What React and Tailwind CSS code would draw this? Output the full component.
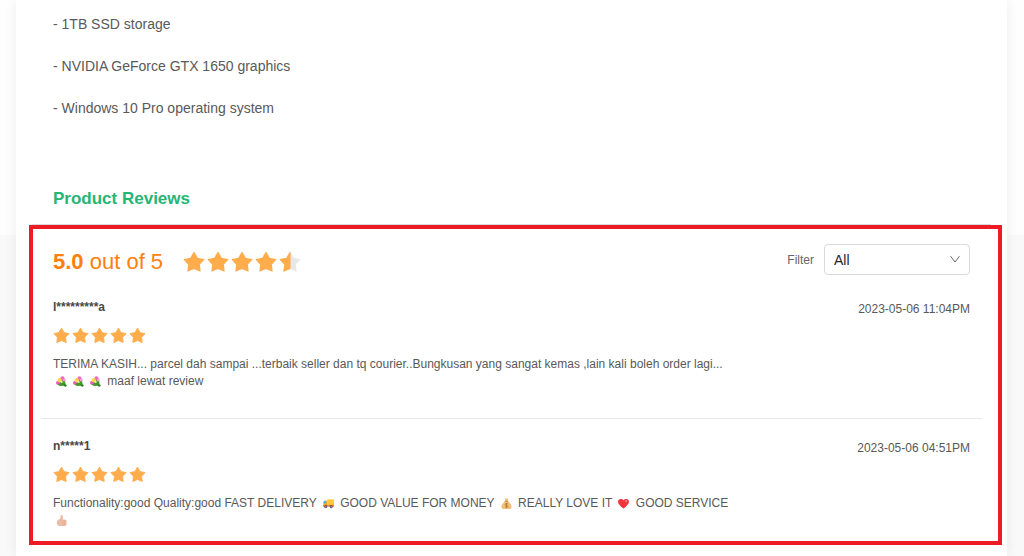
import { useState } from "react";

const STAR_PATH =
  "M12 1.6l3.6 6.4 7 1.3-4.9 5.3.9 7.2-6.6-2.8-6.6 2.8.9-7.2L1.4 9.3l7-1.3z";
const HALF_STAR_PATH = "M12 1.6v17.4l-6.6 2.8.9-7.2L1.4 9.3l7-1.3z";

const specs = [
  "- 1TB SSD storage",
  "- NVIDIA GeForce GTX 1650 graphics",
  "- Windows 10 Pro operating system",
];

const Star = ({ className, half }) => (
  <svg viewBox="0 0 24 24" className={className} strokeLinejoin="round" aria-hidden="true">
    <path
      d={STAR_PATH}
      fill={half ? "#e8e8e8" : "#ffad4c"}
      stroke={half ? "#e8e8e8" : "#ffad4c"}
      strokeWidth="1.4"
    />
    {half && <path d={HALF_STAR_PATH} fill="#ffad4c" stroke="#ffad4c" strokeWidth="1.2" />}
  </svg>
);

const Emoji = ({ label, children }) => (
  <svg
    viewBox="0 0 24 24"
    role="img"
    aria-label={label}
    className="inline-block size-[11px] mx-[3px] align-middle"
  >
    {children}
  </svg>
);

const Bouquet = () => (
  <Emoji label="bouquet">
    <path d="M3 19l8-9 8-3 2 11 3 2-2 3-4-2-9 1z" fill="#3f9a2c" />
    <path d="M17 18l4 5" stroke="#2f7d20" strokeWidth="3" />
    <circle cx="14" cy="5" r="4.5" fill="#f06bc0" />
    <circle cx="4" cy="15" r="4" fill="#ee58b6" />
    <circle cx="18" cy="9" r="3" fill="#f59ad2" />
    <circle cx="8" cy="9" r="4.5" fill="#f9d64a" />
    <circle cx="12" cy="13" r="2.5" fill="#f7ef9a" />
  </Emoji>
);

const Truck = () => (
  <Emoji label="delivery truck">
    <path d="M9 3h15v13H9z" fill="#ffcb2e" />
    <path d="M1 9l3-3h5v12H1z" fill="#ffa726" />
    <path d="M1 8l2-2h4v6H1z" fill="#4fb4e8" />
    <path d="M0 15h24v4H0z" fill="#f07c3c" />
    <circle cx="6" cy="19" r="3.2" fill="#514a6b" />
    <circle cx="18" cy="19" r="3.2" fill="#514a6b" />
    <circle cx="6" cy="19" r="1.2" fill="#c9c5d6" />
    <circle cx="18" cy="19" r="1.2" fill="#c9c5d6" />
  </Emoji>
);

const MoneyBag = () => (
  <Emoji label="money bag">
    <path d="M8 1h8l-2 6c5 3 9 7 9 12 0 3-2 5-5 5H6c-3 0-5-2-5-5 0-5 4-9 9-12z" fill="#f3be70" />
    <path d="M8 7h8" stroke="#b97b3a" strokeWidth="2" />
    <path
      d="M15 13c-2-2-6-1-6 1 0 3 6 2 6 4 0 2-4 3-6 1M12 11v11"
      stroke="#a06a36"
      strokeWidth="1.5"
      fill="none"
    />
  </Emoji>
);

const Heart = () => (
  <Emoji label="red heart">
    <path d="M12 23C4 17 0 12 0 8c0-6 8-8 12-3 4-5 12-3 12 3 0 4-4 9-12 15z" fill="#f5333f" />
    <path d="M15 6c2-2 5-1 5 2-1 1-4 1-5-2z" fill="#ff8f96" />
  </Emoji>
);

const ThumbsUp = () => (
  <Emoji label="thumbs up">
    <path
      d="M10 2c0-3 5-3 5 1v7h4c3 0 4 2 4 4v5c0 3-2 5-5 5H8c-4 0-6-3-6-6 0-4 1-7 4-8 3-1 4-3 4-8z"
      fill="#ecbba6"
    />
    <path d="M15 10v12M19 11v11" stroke="#dfa591" strokeWidth="1.2" fill="none" />
  </Emoji>
);

const reviews = [
  {
    id: 1,
    name: "l*********a",
    date: "2023-05-06 11:04PM",
    body: (
      <>
        TERIMA KASIH... parcel dah sampai ...terbaik seller dan tq courier..Bungkusan yang sangat
        kemas ,lain kali boleh order lagi... <Bouquet />
        <Bouquet />
        <Bouquet /> maaf lewat review
      </>
    ),
  },
  {
    id: 2,
    name: "n*****1",
    date: "2023-05-06 04:51PM",
    body: (
      <>
        Functionality:good Quality:good FAST DELIVERY <Truck /> GOOD VALUE FOR MONEY <MoneyBag />{" "}
        REALLY LOVE IT <Heart /> GOOD SERVICE <ThumbsUp />
      </>
    ),
  },
];

const Review = ({ name, date, body }) => (
  <li className="px-3 pt-[17px] pb-7 border-b border-[#e8e8e8] last:border-b-0 last:pb-3">
    <div className="flex justify-between">
      <h3 className="text-xs leading-5 font-bold text-[#484848]">{name}</h3>
      <time className="text-xs leading-6 text-[#595959]">{date}</time>
    </div>
    <div className="flex gap-[2px] mt-[6px]" role="img" aria-label="5 stars">
      {[1, 2, 3, 4, 5].map((n) => (
        <Star key={n} className="size-[17px]" />
      ))}
    </div>
    <p className="w-3/4 mt-3 text-xs leading-[17px] text-[#595959]">{body}</p>
  </li>
);

const App = () => {
  const [filter, setFilter] = useState("all");

  return (
    <div className="min-h-screen bg-[linear-gradient(#fefefe_235px,#f9f9f9_235px)] font-['Liberation_Sans',Arial,sans-serif]">
      <main className="min-h-screen ml-4 mr-[17px] pt-[3px] pb-3 bg-white shadow-[0_0_12px_rgba(0,0,0,0.07)]">
        {/* Specs */}
        <ul className="px-[37px] text-sm leading-[42px] text-[#595959]">
          {specs.map((spec) => (
            <li key={spec}>{spec}</li>
          ))}
        </ul>

        <h2 className="mx-4 mt-14 px-[21px] pb-[11px] border-b border-[#d9d9d9] text-[17px] leading-7 font-bold text-[#27b574]">
          Product Reviews
        </h2>

        {/* Reviews */}
        <section className="ml-[13px] mr-[5px] pt-[15px] pl-2 pr-4 border-4 border-[#ed1c24]">
          <div className="flex items-center justify-between px-3 mb-[5px]">
            <div className="flex items-center pt-1">
              <p className="text-[22px] leading-6 text-[#ff7f0e]">
                <strong>5.0</strong> out of 5
              </p>
              <div className="flex gap-[2px] ml-5" role="img" aria-label="4.5 stars">
                {[1, 2, 3, 4, 5].map((n) => (
                  <Star key={n} className="size-[22px]" half={n === 5} />
                ))}
              </div>
            </div>

            <div className="flex items-center">
              <label htmlFor="filter" className="mr-[10px] text-xs text-[#666]">
                Filter
              </label>
              <div className="relative">
                <select
                  id="filter"
                  value={filter}
                  onChange={(e) => setFilter(e.target.value)}
                  className="block w-[146px] h-[31px] pl-[9px] pr-8 appearance-none rounded-sm border border-[#d9d9d9] bg-white text-sm text-[#262626]"
                >
                  <option value="all">All</option>
                  <option value="5">5 stars</option>
                  <option value="4">4 stars</option>
                  <option value="3">3 stars</option>
                  <option value="2">2 stars</option>
                  <option value="1">1 star</option>
                </select>
                <svg
                  viewBox="0 0 10 10"
                  className="absolute right-[10px] top-[10px] size-[10px] pointer-events-none"
                  fill="none"
                  stroke="#666"
                  aria-hidden="true"
                >
                  <path d="M.6 2.2L5 8l4.4-5.8" />
                </svg>
              </div>
            </div>
          </div>

          <ul>
            {reviews.map((review) => (
              <Review key={review.id} {...review} />
            ))}
          </ul>
        </section>
      </main>
    </div>
  );
};

export default App;
